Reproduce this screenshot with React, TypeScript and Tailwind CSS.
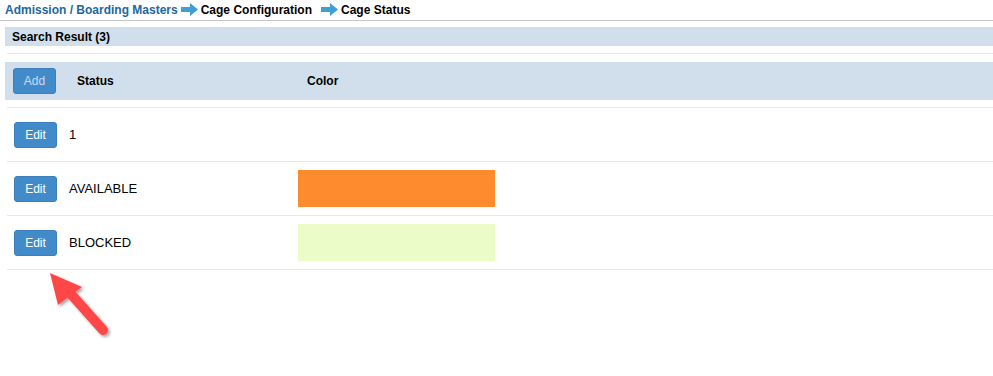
import React from 'react'

type Row = { id: number; status: string; color: string | null }

const ROWS: Row[] = [
  { id: 1, status: '1', color: null },
  { id: 2, status: 'AVAILABLE', color: '#ff8b2f' },
  { id: 3, status: 'BLOCKED', color: '#ebfcc8' },
]

function CrumbArrow() {
  return (
    <svg width="17" height="13" viewBox="0 0 17 13" className="shrink-0">
      <path d="M0 4 H9 V0 L17 6.5 L9 13 V9 H0 Z" fill="#3d9fd3" />
    </svg>
  )
}

export default function App() {
  return (
    <div className="relative w-[993px] h-[376px] bg-white font-['Liberation_Sans',Arial,sans-serif] text-black overflow-hidden">
      {/* Breadcrumb */}
      <div className="h-[21px] border-b border-[#c6c6c6] pl-[5px] flex items-center gap-[3px] text-[12px] font-bold leading-none pb-[1px]">
        <span className="text-[#22679c]">Admission / Boarding Masters</span>
        <CrumbArrow />
        <span>Cage Configuration</span>
        <span className="w-[3px]" />
        <CrumbArrow />
        <span>Cage Status</span>
      </div>

      {/* Search result bar */}
      <div className="mt-[6px] ml-[5px] h-[19px] bg-[#d0dfeb] pl-[7px] flex items-center text-[12px] font-bold">
        Search Result (3)
      </div>
      <div className="mt-[7px] ml-[7px] h-px bg-[#e8e8e8]" />

      {/* Table header */}
      <div className="mt-[8px] ml-[5px] h-[38px] bg-[#d0dfeb] flex items-center text-[12px] font-bold">
        <button className="ml-[8px] w-[43px] h-[26px] rounded-[3px] bg-[#428bca] border border-[#3b7fbd] text-[#c9dcef] font-normal text-[12px]">
          Add
        </button>
        <span className="ml-[21px] w-[230px]">Status</span>
        <span>Color</span>
      </div>
      <div className="mt-[7px] ml-[7px] h-px bg-[#e8e8e8]" />

      {/* Rows */}
      {ROWS.map(r => (
        <div key={r.id} className="ml-[7px] h-[54px] border-b border-[#e8e8e8] flex items-center text-[13px]">
          <button className="ml-[7px] w-[43px] h-[26px] rounded-[3px] bg-[#428bca] border border-[#3b7fbd] text-white text-[12px]">
            Edit
          </button>
          <span className="ml-[12px] w-[229px]">{r.status}</span>
          {r.color && <div className="w-[197px] h-[37px]" style={{ background: r.color }} />}
        </div>
      ))}

      {/* Annotation arrow */}
      <svg className="absolute left-0 top-0 pointer-events-none" width="993" height="376">
        <defs>
          <filter id="sh" x="-50%" y="-50%" width="200%" height="200%">
            <feDropShadow dx="2" dy="2" stdDeviation="1.5" floodColor="#000" floodOpacity="0.35" />
          </filter>
        </defs>
        <g filter="url(#sh)">
          <line x1="103" y1="330" x2="70" y2="293" stroke="#ff4747" strokeWidth="10" strokeLinecap="round" />
          <polygon points="50,273 82,287 58,305" fill="#ff4747" />
        </g>
      </svg>
    </div>
  )
}
